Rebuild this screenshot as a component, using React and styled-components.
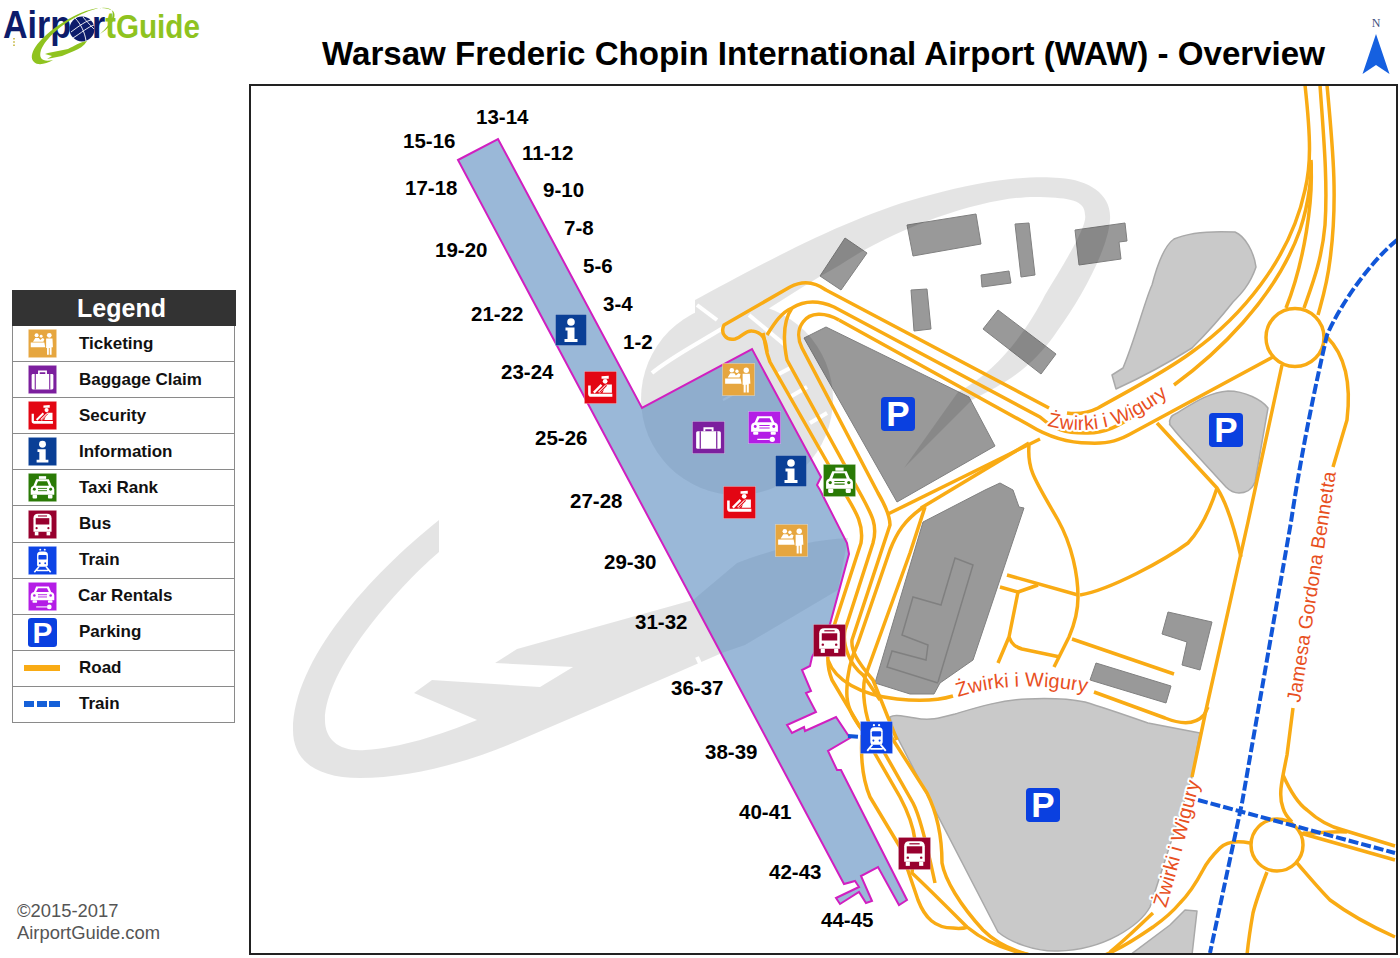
import React from "react";
import styled, { createGlobalStyle } from "styled-components";

const Global = createGlobalStyle`
  html, body { margin: 0; padding: 0; background: #fff; }
  body { font-family: "Liberation Sans", Arial, sans-serif; overflow: hidden; }
`;

const Page = styled.div`
  width: 1400px;
  height: 958px;
  display: grid;
  grid-template-columns: 249px 1151px;
  grid-template-rows: 84px 874px;
`;
const LogoCell = styled.div`
  display: flex;
  align-items: flex-start;
`;
const Header = styled.header`
  display: flex;
  align-items: flex-start;
  justify-content: space-between;
  padding: 0 10px 0 73px;
`;
const Title = styled.h1`
  margin: 35px 0 0;
  font-size: 33.1px;
  line-height: 38px;
  font-weight: 700;
  color: #000;
  white-space: nowrap;
`;
const Sidebar = styled.aside`
  display: flex;
  flex-direction: column;
  padding: 206px 0 14px 12px;
`;
const Legend = styled.section`
  width: 223px;
  height: 433px;
  box-sizing: border-box;
  display: flex;
  flex-direction: column;
  border: solid #8a8a8a;
  border-width: 0 1.5px;
`;
const LegendHead = styled.div`
  height: 36px;
  flex: none;
  margin: 0 -1.5px;
  padding-right: 4px;
  background: #333;
  color: #fff;
  font-weight: 700;
  font-size: 25px;
  line-height: 37px;
  text-align: center;
`;
const LegendRow = styled.div`
  flex: 1;
  display: flex;
  align-items: center;
  box-sizing: border-box;
  border-bottom: 1.5px solid #8a8a8a;
`;
const IconSlot = styled.div`
  width: 64px;
  flex: none;
  display: flex;
  justify-content: center;
  padding-right: 6px;
  box-sizing: border-box;
  svg { display: block; }
`;
const RowLabel = styled.span`
  font-size: 17px;
  font-weight: 700;
  color: #111;
  margin-left: ${(p) => p.$shift || 0}px;
`;
const RoadSwatch = styled.div`
  width: 36px;
  height: 6px;
  background: #f9ab14;
`;
const RailSwatch = styled.div`
  width: 36px;
  height: 6px;
  background: repeating-linear-gradient(90deg, #1560d8 0 10.5px, transparent 10.5px 12.7px);
`;
const Copyright = styled.div`
  margin-top: auto;
  padding-left: 5px;
  font-size: 18.4px;
  line-height: 22px;
  color: #555;
`;
const MapFrame = styled.main`
  width: 1145px;
  height: 867px;
  border: 2px solid #222;
  svg { display: block; }
`;

const Road = styled.path`
  fill: none;
  stroke: #f9ab14;
  stroke-width: 3.5;
  stroke-linejoin: round;
`;
const Rail = styled.path`
  fill: none;
  stroke: #1156d8;
  stroke-width: 4;
  stroke-dasharray: 10 3;
`;
const Building = styled.polygon`
  fill: #999;
  stroke: #808080;
  stroke-width: 1;
`;
const Lot = styled.path`
  fill: #c9c9c9;
  stroke: #a9a9a9;
  stroke-width: 1.5;
  stroke-linejoin: round;
`;
const BuildingEdge = styled.polyline`
  fill: none;
  stroke: #808080;
  stroke-width: 1.5;
`;
const Concourse = styled.polygon`
  fill: ${(p) => (p.$edge ? "none" : "#5789be")};
  fill-opacity: 0.6;
  stroke: ${(p) => (p.$edge ? "#d11fc0" : "none")};
  stroke-width: 2;
`;
const Watermark = styled.g`
  fill: #000;
  opacity: 0.1;
`;
const GateLabel = styled.text`
  font-family: "Liberation Sans", Arial, sans-serif;
  font-weight: 700;
  font-size: 20.5px;
  fill: #000;
`;
const RoadLabel = styled.text`
  font-family: "Liberation Sans", Arial, sans-serif;
  font-size: ${(p) => p.$size}px;
  fill: #e8501f;
  stroke: #fff;
  stroke-width: 4px;
  paint-order: stroke;
  stroke-linejoin: round;
`;

const COL = {
  ticket: "#e6a63f",
  bag: "#7c1f9e",
  security: "#e30613",
  info: "#0a3f96",
  taxi: "#2a7a06",
  bus: "#98002e",
  train: "#0d44e6",
  car: "#b41de6",
  parking: "#0a40e0",
};

const Glyph = ({ kind }) => {
  const c = COL[kind];
  switch (kind) {
    case "ticket":
      return (
        <g fill="#fff">
          <circle cx="9.5" cy="7" r="2.2" />
          <circle cx="14.5" cy="8" r="1.6" />
          <circle cx="23.5" cy="7" r="2.6" />
          <path d="M5.5 14 L8 10 L12 10 L13.5 12 L16 10 L18 11 L17 14 Z" />
          <path d="M3 15 H18 L19 20 H3 Z" />
          <path d="M20 10.5 H27 L27.5 20 H26 V28.5 H24 V21 H23 V28.5 H21 V21 H20 Z" />
        </g>
      );
    case "bag":
      return (
        <g>
          <path d="M12 10 V7 H20 V10" fill="none" stroke="#fff" strokeWidth="1.8" />
          <rect x="4" y="10" width="24" height="17" rx="1.5" fill="#fff" />
          <path d="M8 10 V27 M24 10 V27" stroke={c} strokeWidth="1.2" />
        </g>
      );
    case "security":
      return (
        <g>
          <path d="M17 5 L24 4.5 V7.5 H17 Z" fill="#fff" />
          <circle cx="20.5" cy="10" r="2.3" fill="#fff" />
          <path d="M4 14 H6.5 V22 H27.5 V25 H7 Q4 25 4 22 Z" fill="#fff" />
          <path d="M9.5 21 L17 13.5 M14.5 21 L21 14.5" stroke="#fff" strokeWidth="2.2" />
          <path d="M21 13 H27 V21 H18 Z" fill="#fff" />
          <path d="M15 21 L22 14" stroke={c} strokeWidth="1" />
        </g>
      );
    case "info":
      return (
        <g fill="#fff">
          <circle cx="16" cy="8" r="3.8" />
          <path d="M10.5 13.5 H19.5 V25 H22.5 V28 H9.5 V25 H12.5 V16.5 H10.5 Z" />
        </g>
      );
    case "taxi":
      return (
        <g>
          <rect x="12" y="3.5" width="8" height="3" fill="#fff" />
          <path d="M9 7 H23 L26 14 Q29 15 29 18 V24 H3 V18 Q3 15 6 14 Z" fill="#fff" />
          <path d="M11 9 H21 L23 14 H9 Z" fill={c} />
          <rect x="5" y="24" width="5" height="4" rx="1" fill="#fff" />
          <rect x="22" y="24" width="5" height="4" rx="1" fill="#fff" />
          <circle cx="7" cy="18" r="1.6" fill={c} />
          <circle cx="25" cy="18" r="1.6" fill={c} />
          <path d="M11 17 H21 M11 19.5 H21" stroke={c} strokeWidth="1" />
        </g>
      );
    case "bus":
      return (
        <g>
          <path d="M6 9 Q6 4 11 4 H21 Q26 4 26 9 V24 H6 Z" fill="#fff" />
          <rect x="8.5" y="9" width="15" height="7" fill={c} />
          <rect x="11" y="6" width="10" height="1.2" fill={c} />
          <circle cx="9.5" cy="20" r="1.2" fill={c} />
          <circle cx="22.5" cy="20" r="1.2" fill={c} />
          <rect x="7.5" y="24" width="4" height="4" fill="#fff" />
          <rect x="20.5" y="24" width="4" height="4" fill="#fff" />
        </g>
      );
    case "train":
      return (
        <g>
          <circle cx="13.5" cy="4" r="1.1" fill="#fff" />
          <circle cx="18.5" cy="4" r="1.1" fill="#fff" />
          <path d="M10 10 Q10 6 14 6 H18 Q22 6 22 10 V20 Q22 23 19 23 H13 Q10 23 10 20 Z" fill="#fff" />
          <rect x="11.5" y="10" width="9" height="5" rx="1" fill={c} />
          <circle cx="13" cy="19" r="1" fill={c} />
          <circle cx="19" cy="19" r="1" fill={c} />
          <path d="M12 23 L7 29 M20 23 L25 29 M10 27 H22" stroke="#fff" strokeWidth="1.8" fill="none" />
        </g>
      );
    case "car":
      return (
        <g>
          <path d="M9 5 H23 L25.5 11 Q29 12 29 15 V20 H3 V15 Q3 12 6.5 11 Z" fill="#fff" />
          <path d="M11 7 H21 L23 11 H9 Z" fill={c} />
          <rect x="5" y="20" width="5" height="3" rx="1" fill="#fff" />
          <rect x="22" y="20" width="5" height="3" rx="1" fill="#fff" />
          <circle cx="7" cy="15" r="1.4" fill={c} />
          <circle cx="25" cy="15" r="1.4" fill={c} />
          <path d="M11 14 H21 M11 16.5 H21" stroke={c} strokeWidth="1" />
          <path d="M9 27.5 H21" stroke="#fff" strokeWidth="1.2" />
          <circle cx="23.5" cy="27.5" r="2.6" fill="#fff" />
        </g>
      );
    default:
      return null;
  }
};

const Sign = ({ kind, x, y, size }) => (
  <svg x={x} y={y} width={size} height={size} viewBox="0 0 32 32" overflow="visible">
    {kind === "parking" ? (
      <>
        <rect x="0" y="0" width="32" height="32" rx="3.5" fill={COL.parking} />
        <text x="16" y="27.5" textAnchor="middle" fontFamily="Liberation Sans, Arial, sans-serif" fontWeight="700" fontSize="33" fill="#fff">P</text>
      </>
    ) : (
      <>
        <rect x="0.4" y="0.4" width="31.2" height="31.2" fill={COL[kind]} stroke="#fff" strokeOpacity="0.35" strokeWidth="0.8" />
        <Glyph kind={kind} />
      </>
    )}
  </svg>
);

const LogoArt = () => (
  <svg width="249" height="70" viewBox="0 0 249 70" fontFamily="Liberation Sans, Arial, sans-serif">
    <path d="M14,38 V46" stroke="#c3b53a" strokeWidth="1.6" strokeDasharray="1.6 1.6" />
    <text x="3" y="38" fontWeight="700" fill="#8fc31f" textLength="197" lengthAdjust="spacingAndGlyphs">
      <tspan fontSize="39" fill="#0d1c6b">Airpor</tspan>
      <tspan fontSize="37">t</tspan>
      <tspan fontSize="34">Guide</tspan>
    </text>
    <path fill="#8fc31f" d="M113,11 C100,3 78,12 56,27 C38,40 27,55 34,62 C38,66 46,64 53,60 C44,62 38,60 41,50 C46,38 62,24 78,16 C92,9 103,6 110,9 C116,12 112,24 100,34 C110,28 118,17 113,11 Z" />
    <path fill="#8fc31f" d="M87,41 C80,42 74,46 68,49 L48,53 L45,54 L52,56 L47,59 L62,56 L74,51 C79,49 84,46 87,41 Z" />
    <circle cx="82" cy="29" r="12.5" fill="#0d1c6b" />
    <path d="M75,18 C81,24 85,33 86,41 M83,17 C87,22 92,27 94,29 M71,32 C79,26 87,20 92,20 M73,38 C81,33 88,27 94,25" fill="none" stroke="#fff" strokeWidth="0.9" />
  </svg>
);

const NorthArrow = () => (
  <svg width="28" height="74" viewBox="0 0 28 74" fontFamily="Liberation Serif, serif">
    <text x="14" y="27" textAnchor="middle" fontSize="12" fill="#3d4f7d">N</text>
    <polygon points="14,34 0.5,74 14,65 27.5,74" fill="#1560e0" />
  </svg>
);

const gates = [
  ["13-14", 476, 117], ["15-16", 403, 141], ["11-12", 522, 153], ["17-18", 405, 188],
  ["9-10", 543, 190], ["7-8", 564, 228], ["19-20", 435, 250], ["5-6", 583, 266],
  ["3-4", 603, 304], ["21-22", 471, 314], ["1-2", 623, 342], ["23-24", 501, 372],
  ["25-26", 535, 438], ["27-28", 570, 501], ["29-30", 604, 562], ["31-32", 635, 622],
  ["36-37", 671, 688], ["38-39", 705, 752], ["40-41", 739, 812], ["42-43", 769, 872],
  ["44-45", 821, 920],
];

const buildings = [
  "826,327 804,338 897,502 995,446 969,397",
  "845,238 867,253 841,290 820,276",
  "907,225 976,214 981,244 913,256",
  "1015,224 1029,223 1035,275 1021,277",
  "1075,230 1125,223 1127,241 1119,242 1121,259 1079,265",
  "981,275 1009,271 1011,283 982,287",
  "911,290 927,289 931,329 914,331",
  "998,310 1056,354 1041,374 983,329",
  "923,522 985,490 1000,483 1013,490 1019,507 1024,508 973,660 940,683 934,694 910,694 875,683",
  "1168,612 1212,622 1200,670 1182,665 1187,642 1162,634",
  "1096,663 1171,686 1166,703 1090,680",
];

const lots = [
  "M1174,239 C1190,232 1215,231 1235,232 C1245,236 1254,252 1256,267 C1250,285 1240,295 1233,302 C1215,325 1200,340 1192,348 C1165,365 1140,378 1116,389 L1112,375 L1123,368 C1135,340 1145,300 1152,285 C1158,262 1165,245 1174,239 Z",
  "M1228,391 C1245,391 1262,400 1268,408 L1255,482 C1252,490 1245,493 1239,493 C1232,493 1228,489 1226,487 L1181,438 C1172,428 1168,422 1170,425 C1168,418 1172,415 1177,413 C1195,402 1210,392 1228,391 Z",
  "M890,717 C895,714 901,716 915,718 C930,721 940,718 955,714 C975,708 1000,700 1027,699 C1050,698 1070,699 1085,702 C1105,708 1125,715 1148,723 L1200,733 L1192,777 L1150,907 C1140,925 1105,950 1058,951 C1035,952 1010,942 998,932 L892,727 Z",
  "M1130,955 L1170,925 L1185,910 L1197,911 L1192,955 Z",
];

const roads = [
  "M767,352 C766,340 763,332 752,331 C745,330 743,337 735,339 C726,341 720,333 724,325 L790,287 C803,280 815,282 826,290 L1049,408",
  "M1067,413 C1080,415 1090,412 1098,408 C1130,390 1165,372 1192,352 C1240,318 1290,260 1305,190 C1311,165 1311,140 1305,85",
  "M767,335 C775,322 782,312 792,308 C805,300 818,300 834,307 L1040,417 C1055,430 1065,433 1085,433 C1105,434 1120,425 1135,415",
  "M1174,385 C1215,355 1275,300 1300,230 C1310,200 1312,170 1311,160",
  "M839,320 C825,312 810,312 803,322 C797,330 798,340 802,348 L878,493 C885,505 890,515 890,525 L852,640 C851,650 856,660 873,680 L897,740",
  "M839,320 L1029,425 C1050,438 1070,443 1089,443 C1110,444 1120,440 1134,432 L1273,357",
  "M763,333 C766,345 765,350 770,362 L847,497 C856,512 864,525 861,543 L835,623 C826,650 826,665 832,680 L860,727",
  "M792,308 C785,318 782,335 787,360 L860,493 C872,515 878,525 873,543 L845,630 C842,645 850,665 863,675 L880,700",
  "M828,660 C835,680 860,695 897,699 C925,702 940,700 953,696",
  "M1094,692 L1165,718 C1180,724 1195,725 1204,715 L1208,707",
  "M922,508 C905,520 897,532 890,550 L858,643 C850,660 846,680 847,697 C848,710 855,720 862,730",
  "M925,507 L910,553 L865,677 C862,690 864,715 873,733",
  "M888,514 L1040,439",
  "M921,508 L1029,443",
  "M1029,445 C1027,470 1035,480 1058,520 C1072,545 1078,575 1078,597 C1078,615 1072,630 1069,637 L1054,667",
  "M1217,488 C1210,510 1200,530 1188,543 C1165,560 1110,590 1080,595",
  "M1157,423 L1217,488 C1228,505 1236,535 1241,557",
  "M1282,365 L1248,522 L1206,710 L1192,777",
  "M1007,575 L1078,595",
  "M1000,587 L1018,592 L1038,585",
  "M1018,592 L1009,637 L998,663",
  "M1009,637 C1012,645 1016,647 1022,649 L1060,657",
  "M1072,639 L1174,674",
  "M1327,85 C1333,150 1338,200 1330,260 C1327,285 1322,300 1318,315",
  "M1320,85 C1323,130 1328,180 1325,225 C1322,260 1312,285 1304,308",
  "M1311,165 C1313,200 1305,260 1286,308",
  "M1327,337 C1350,360 1350,395 1347,420 L1333,467",
  "M1293,708 L1287,755 C1282,780 1278,795 1283,808 C1285,815 1288,818 1292,822",
  "M1283,775 C1292,795 1300,805 1307,810 C1320,822 1335,828 1343,830 L1395,846",
  "M1303,833 C1315,834 1330,831 1347,832",
  "M1300,833 L1395,860",
  "M1250,843 C1235,840 1225,843 1220,848 C1210,858 1205,866 1203,870 C1195,885 1185,898 1180,903 C1170,915 1160,922 1153,927 C1140,936 1122,948 1105,955",
  "M1153,913 C1140,925 1125,940 1110,952",
  "M1267,872 C1260,890 1255,905 1253,913 C1250,930 1248,945 1247,955",
  "M1297,863 C1310,878 1320,890 1330,900 C1350,915 1375,928 1395,937",
  "M862,735 C860,765 865,785 870,797 L900,847 L918,900 C925,918 935,928 953,928 C960,929 965,928 968,927",
  "M870,745 L900,797 C908,812 913,825 915,840 L912,873 C925,885 940,900 967,927 C985,942 1005,950 1030,955",
  "M880,745 L913,803 C922,820 930,860 935,883",
  "M890,735 L927,793 C938,815 942,840 942,863 C945,880 960,905 983,930 C995,942 1010,950 1030,955",
];

const signs = [
  ["info", 555, 314, 32], ["security", 584, 371, 33], ["ticket", 722, 363, 33], ["car", 748, 411, 33],
  ["bag", 692, 421, 33], ["info", 775, 455, 32], ["taxi", 823, 464, 33], ["security", 723, 486, 33],
  ["ticket", 775, 524, 33], ["bus", 813, 624, 33], ["train", 860, 721, 33], ["bus", 898, 837, 33],
  ["parking", 881, 397, 34], ["parking", 1209, 413, 34], ["parking", 1026, 788, 34],
];

const legendRows = [
  ["ticket", "Ticketing"], ["bag", "Baggage Claim"], ["security", "Security"], ["info", "Information"],
  ["taxi", "Taxi Rank"], ["bus", "Bus"], ["train", "Train"], ["car", "Car Rentals", -1], ["parking", "Parking"],
];

const TERMINAL =
  "458,160 498,139 642,408 752,349 821,477 817,485 820,490 847,543 849,554 830,624 812,657 810,666 802,670 811,691 806,693 816,712 787,725 792,733 804,727 805,731 836,717 850,738 828,751 837,770 841,770 907,900 899,905 878,867 861,876 872,901 866,903 859,892 840,904 836,898 859,887 855,881 844,884";

export default function App() {
  return (
    <Page>
      <Global />
      <LogoCell><LogoArt /></LogoCell>
      <Header>
        <Title>Warsaw Frederic Chopin International Airport (WAW) - Overview</Title>
        <NorthArrow />
      </Header>
      <Sidebar>
        <Legend>
          <LegendHead>Legend</LegendHead>
          {legendRows.map(([k, label, shift]) => (
            <LegendRow key={label}>
              <IconSlot><Sign kind={k} size={29} /></IconSlot>
              <RowLabel $shift={(shift || 0) + 2}>{label}</RowLabel>
            </LegendRow>
          ))}
          <LegendRow>
            <IconSlot><RoadSwatch /></IconSlot>
            <RowLabel $shift={2}>Road</RowLabel>
          </LegendRow>
          <LegendRow>
            <IconSlot><RailSwatch /></IconSlot>
            <RowLabel $shift={2}>Train</RowLabel>
          </LegendRow>
        </Legend>
        <Copyright>©2015-2017<br />AirportGuide.com</Copyright>
      </Sidebar>
      <MapFrame>
        <svg width="1145" height="867" viewBox="251 86 1145 867">
          <defs>
            <mask id="wm" maskUnits="userSpaceOnUse" x="251" y="86" width="1145" height="867">
              <rect x="251" y="86" width="1145" height="867" fill="#fff" />
              <g fill="none" stroke="#000" strokeWidth="4">
                <path d="M652,373 C670,358 695,345 723,328" />
                <path d="M697,305 L717,320" />
                <path d="M749,315 L785,345" />
                <path d="M777,375 L792,367" />
                <path d="M790,397 L807,387" />
                <path d="M810,423 L827,413" />
                <path d="M723,400 L745,388" strokeWidth="2" />
                <path d="M697,657 L703,670" />
              </g>
            </mask>
            <path id="rl1" d="M1047,426 C1090,436 1130,428 1172,392" />
            <path id="rl2" d="M958,697 C1000,683 1050,684 1094,694" />
            <path id="rl3" d="M1166,908 C1178,870 1188,825 1200,782" />
            <path id="rl4" d="M1300,703 L1336,472" />
          </defs>

          {buildings.map((p) => <Building key={p} points={p} />)}
          <BuildingEdge points="938,682 973,565 955,558 941,605 913,597 902,635 928,645 926,660 892,651 887,667 938,683" />
          {lots.map((d) => <Lot key={d} d={d} />)}

          <Watermark mask="url(#wm)">
            <circle cx="737" cy="399" r="96" />
            <path d="M695,300 C760,265 850,215 930,195 C985,180 1030,175 1060,178 C1090,180 1112,195 1110,220 C1108,250 1080,300 1058,330 C1030,372 1000,385 972,400 L904,468 L958,392 C1000,370 1030,325 1045,295 C1065,262 1088,225 1085,215 C1085,200 1070,198 1040,197 C990,195 900,225 840,265 C790,293 730,335 695,355 Z" />
            <path d="M439,520 L439,552 C395,590 325,670 325,720 C325,740 340,752 365,750 C400,748 440,735 477,720 L414,693 L432,680 L540,687 L573,667 L495,663 L517,649 L693,600 L737,563 C770,550 810,540 848,538 L838,590 L745,645 L722,653 L667,677 L520,740 C470,762 410,778 360,778 C315,778 293,760 293,730 C293,660 370,575 439,520 Z" />
          </Watermark>

          <Concourse points={TERMINAL} />
          <Concourse $edge points={TERMINAL} />

          {roads.map((d) => <Road key={d} d={d} />)}
          <Road as="circle" cx="1295" cy="337.5" r="29" />
          <Road as="ellipse" cx="1277" cy="845" rx="26" ry="26" />

          <Rail d="M1397,240 C1370,262 1340,305 1327,335 C1312,400 1300,462 1291,522 L1242,803 L1210,953" />
          <Rail d="M1198,800 L1395,853" />
          <Rail d="M848,736 L860,737" />

          <RoadLabel $size={20}><textPath href="#rl1">Żwirki i Wigury</textPath></RoadLabel>
          <RoadLabel $size={20}><textPath href="#rl2">Żwirki i Wigury</textPath></RoadLabel>
          <RoadLabel $size={20}><textPath href="#rl3">Żwirki i Wigury</textPath></RoadLabel>
          <RoadLabel $size={19.5}><textPath href="#rl4">Jamesa Gordona Bennetta</textPath></RoadLabel>

          {signs.map(([k, x, y, s]) => <Sign key={k + x} kind={k} x={x} y={y} size={s} />)}
          {gates.map(([t, x, y]) => <GateLabel key={t} x={x} y={y + 7}>{t}</GateLabel>)}
        </svg>
      </MapFrame>
    </Page>
  );
}
